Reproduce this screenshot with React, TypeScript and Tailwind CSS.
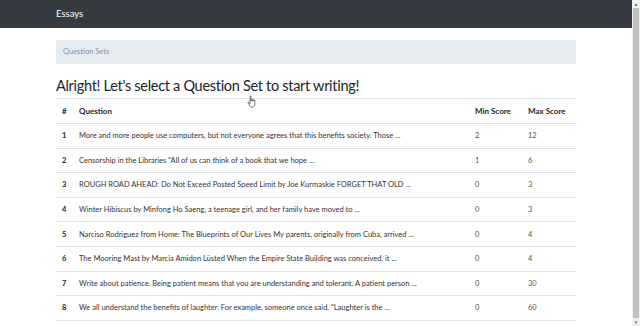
import React from 'react';

const rows = [
  { id: 1, q: 'More and more people use computers, but not everyone agrees that this benefits society. Those ...', min: 2, max: 12 },
  { id: 2, q: 'Censorship in the Libraries "All of us can think of a book that we hope ...', min: 1, max: 6 },
  { id: 3, q: 'ROUGH ROAD AHEAD: Do Not Exceed Posted Speed Limit by Joe Kurmaskie FORGET THAT OLD ...', min: 0, max: 3 },
  { id: 4, q: 'Winter Hibiscus by Minfong Ho Saeng, a teenage girl, and her family have moved to ...', min: 0, max: 3 },
  { id: 5, q: 'Narciso Rodriguez from Home: The Blueprints of Our Lives My parents, originally from Cuba, arrived ...', min: 0, max: 4 },
  { id: 6, q: 'The Mooring Mast by Marcia Amidon Lüsted When the Empire State Building was conceived, it ...', min: 0, max: 4 },
  { id: 7, q: 'Write about patience. Being patient means that you are understanding and tolerant. A patient person ...', min: 0, max: 30 },
  { id: 8, q: 'We all understand the benefits of laughter. For example, someone once said, "Laughter is the ...', min: 0, max: 60 },
];

function HandCursor() {
  return (
    <svg className="absolute left-[247px] top-[95px]" width="11" height="14" viewBox="0 0 11 14">
      <path
        d="M3 1.2c0-.6.9-.6.9 0V6l.4-.1V4.6c0-.6.9-.6.9 0v1.3h.4v-.9c0-.6.9-.6.9 0v1h.4v-.6c0-.6.9-.6.9 0v3.8c0 1.5-.9 2.6-2 2.8H4.6C3.5 12 2.9 11 2.3 10L1 7.7c-.3-.6.4-1 .8-.5L3 8.6z"
        fill="#fff"
        stroke="#555"
        strokeWidth="0.8"
        strokeLinejoin="round"
      />
    </svg>
  );
}

export default function App() {
  return (
    <div className="relative flex h-[326px] w-[640px] overflow-hidden bg-white font-['Lato',sans-serif] text-[#212529]">
      <div className="flex-1">
        <nav className="flex h-[28px] items-center bg-[#343a40] pl-[56px]">
          <span className="text-[9.5px] text-white">Essays</span>
        </nav>
        <div className="mx-[56px] mt-[12px]">
          <div className="flex h-[24px] items-center rounded-[2px] bg-[#e6ebf0] px-[7px] text-[7.5px] text-[#8a9199]">
            Question Sets
          </div>
          <h1 className="mt-[12px] text-[14.5px] leading-[20px] font-normal tracking-[-0.3px]">
            Alright! Let's select a Question Set to start writing!
          </h1>
          <table className="mt-[2px] w-full border-collapse text-[7.5px]">
            <thead>
              <tr className="h-[25px] border-t border-b-[1.5px] border-[#dee2e6] text-[8px]">
                <th className="w-[23px] pl-[6px] text-left font-bold">#</th>
                <th className="text-left font-bold">Question</th>
                <th className="w-[53px] text-left font-bold">Min Score</th>
                <th className="w-[48px] text-left font-bold">Max Score</th>
              </tr>
            </thead>
            <tbody>
              {rows.map((r) => (
                <tr key={r.id} className="h-[24.6px] border-b border-[#dee2e6]">
                  <td className="pl-[6px] font-bold">{r.id}</td>
                  <td className="text-[#333]">{r.q}</td>
                  <td className="text-[#555]">{r.min}</td>
                  <td className="text-[#555]">{r.max}</td>
                </tr>
              ))}
            </tbody>
          </table>
        </div>
      </div>
      <div className="flex w-[8px] flex-col bg-[#f0f0f0]">
        <div className="h-[8px] text-center text-[5px] leading-[8px] text-[#777]">▲</div>
        <div className="mx-[1px] flex-1 bg-[#c1c1c1]" />
        <div className="h-[8px] text-center text-[5px] leading-[8px] text-[#777]">▼</div>
      </div>
      <HandCursor />
    </div>
  );
}
